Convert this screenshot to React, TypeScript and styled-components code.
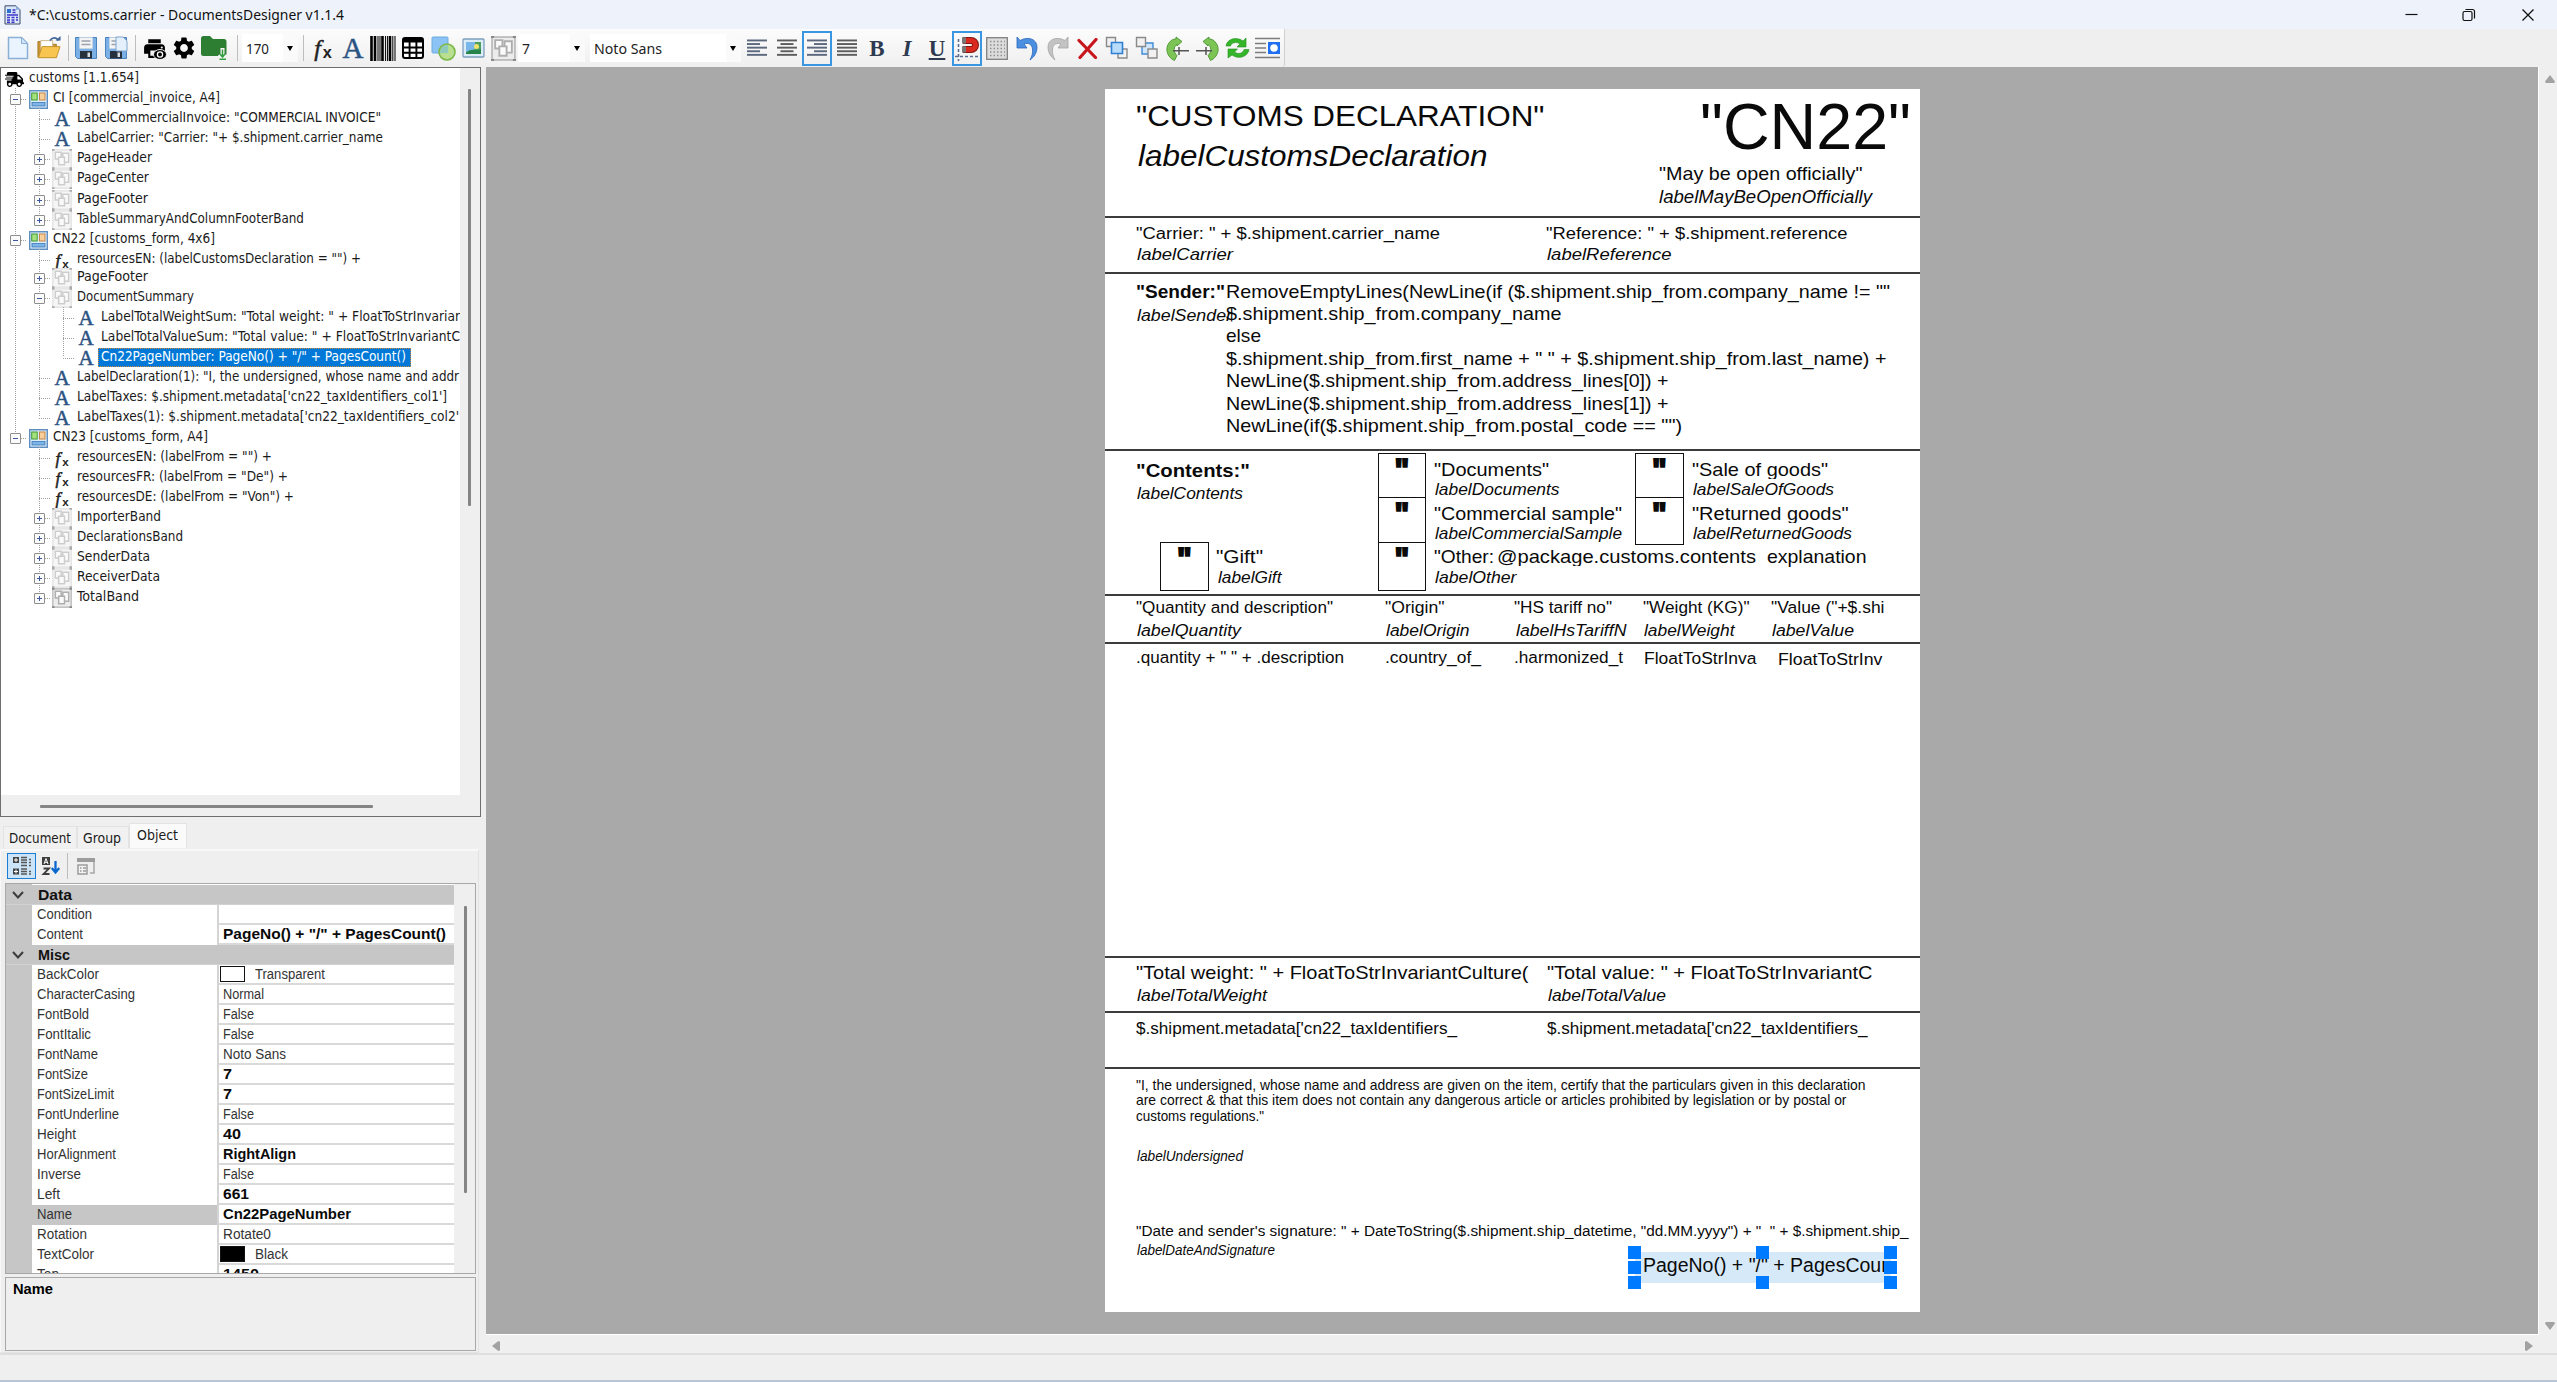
import React, { useLayoutEffect, useRef } from "react";
import styled, { createGlobalStyle, css } from "styled-components";
import { FaShippingFast } from "react-icons/fa";
import { MdFolder, MdPrint, MdSettings } from "react-icons/md";

const GlobalStyle = createGlobalStyle`
  html, body { margin: 0; padding: 0; overflow: hidden; }
  *, *::before, *::after { box-sizing: border-box; }
`;

const uiFont = `"DejaVu Sans Condensed", "DejaVu Sans", "Noto Sans", sans-serif`;
const gridFont = `"Liberation Sans", Arial, sans-serif`;

/* ---------- text that is stretched or condensed to a given width ---------- */

const Stretch = styled.span`
  display: inline-block;
  white-space: pre;
  transform-origin: 0 50%;
`;

function Fit({ w, children }: { w?: number; children: string }) {
  const ref = useRef<HTMLSpanElement>(null);
  useLayoutEffect(() => {
    const el = ref.current;
    if (!el || !w) return;
    el.style.transform = "none";
    el.style.width = "auto";
    const natural = el.getBoundingClientRect().width;
    el.style.width = `${w}px`;
    el.style.transform = `scaleX(${w / natural})`;
  }, [w, children]);
  return <Stretch ref={ref}>{children}</Stretch>;
}

/* ---------- window frame ---------- */

const Window = styled.div`
  width: 2557px;
  height: 1382px;
  display: flex;
  flex-direction: column;
  background: #efefef;
  color: #1b1b1b;
  font: 13.7px ${uiFont};
  overflow: hidden;
`;

const TitleBar = styled.header`
  flex: 0 0 29px;
  display: flex;
  align-items: center;
  background: #eef3fb;
  padding-left: 4px;
`;

const Title = styled.div`
  flex: 1;
  margin-left: 8px;
  color: #111;
  font: 14px/28px "Noto Sans", "Open Sans", sans-serif;
`;

const WindowButtons = styled.div`
  display: flex;
  & > svg { width: 58.5px; height: 28px; }
`;

const ToolRow = styled.div`
  flex: 0 0 38px;
  display: flex;
`;

const ToolBar = styled.div`
  width: 1285px;
  display: flex;
  align-items: center;
  padding-left: 3px;
  background: linear-gradient(#fcfcfc, #efefef);
  border-right: 1px solid #cfcfcf;
  border-bottom-right-radius: 3px;
`;

const Tool = styled.div<{ $on?: boolean; $w?: number }>`
  flex: 0 0 ${(p) => p.$w ?? 30}px;
  height: 35px;
  display: flex;
  align-items: center;
  justify-content: center;
  border: ${(p) => (p.$on ? "2px solid #3a96e0" : "0")};
  svg { display: block; flex: none; }
`;

const Divider = styled.div<{ $l: number; $r: number }>`
  flex: none;
  width: 1px;
  height: 26px;
  margin: 0 ${(p) => p.$r}px 0 ${(p) => p.$l}px;
  background: #bdbdbd;
`;

const Combo = styled.div<{ $w: number; $gap: number }>`
  flex: none;
  width: ${(p) => p.$w}px;
  height: 28px;
  margin-right: ${(p) => p.$gap}px;
  padding: 0 5px 0 4px;
  display: flex;
  align-items: center;
  justify-content: space-between;
  background: linear-gradient(to left, #fafafa 15px, #fff 15px);
  font: 14.5px "Noto Sans", sans-serif;
  color: #222;
  &::after {
    content: "";
    border: 3.5px solid transparent;
    border-top: 5px solid #000;
    border-bottom: 0;
  }
`;

const Glyph = styled.span<{ $italic?: boolean; $line?: boolean; $bold?: boolean; $c?: string; $s?: number }>`
  font-family: "Liberation Serif", serif;
  font-size: ${(p) => p.$s ?? 23}px;
  line-height: 1;
  font-weight: ${(p) => (p.$bold ? 700 : 400)};
  font-style: ${(p) => (p.$italic ? "italic" : "normal")};
  text-decoration: ${(p) => (p.$line ? "underline" : "none")};
  -webkit-text-stroke: ${(p) => (p.$bold ? 0 : 0.5)}px currentColor;
  color: ${(p) => p.$c ?? "#2d3a50"};
`;

const FxBox = styled.span<{ $s: number }>`
  display: inline-flex;
  align-items: baseline;
  font: italic 400 ${(p) => p.$s}px/1 "Liberation Serif", serif;
  -webkit-text-stroke: 0.5px currentColor;
  color: #222;
  sub {
    font: 700 ${(p) => p.$s * 0.68}px/1 "Liberation Sans", sans-serif;
    -webkit-text-stroke: 0;
    vertical-align: baseline;
    margin-left: 2px;
    position: relative;
    top: 2px;
  }
`;

const Fx = ({ s }: { s: number }) => (
  <FxBox $s={s}>f<sub>x</sub></FxBox>
);

/* ---------- icons ---------- */

const AppIcon = () => (
  <svg width="17" height="20" viewBox="0 0 17 20">
    <path d="M1 .8h11l4 4V19H1z" fill="#dbe7f7" stroke="#3b4a6b" />
    <path d="M12 .8v4h4z" fill="#8fb0dc" />
    <path d="M3 4h4v4H3z" fill="#2f6fd0" />
    <path d="M8.500 5h3M8.500 7.500h3M3 10h11M3 12.500h3M7.500 12.500h3M12 12.500h2M3 15h3M7.500 15h3M12 15h2M3 17.300h3M7.500 17.300h3" stroke="#3b35c9" strokeWidth="1.500" />
  </svg>
);

const NewIcon = () => (
  <svg width="22" height="24" viewBox="0 0 22 24">
    <path d="M1.500 1.500h13l6 6v15h-19z" fill="#eaf4fe" stroke="#8bb0d8" strokeWidth="1.500" />
    <path d="M14.500 1.500v6h6z" fill="#cfe3f8" stroke="#8bb0d8" />
  </svg>
);

const OpenIcon = () => (
  <svg width="26" height="24" viewBox="0 0 26 26">
    <path d="M1 23V6h7l2 3h11v14z" fill="#c99433" stroke="#a87927" />
    <path d="M4 5h13v10H4z" fill="#fff" stroke="#c9b182" />
    <path d="M1.500 23.500l4-12H25l-4 12z" fill="#f8c650" stroke="#c28f2a" />
    <path d="M14 5c3-4 7-4 9 0" fill="none" stroke="#44699b" strokeWidth="1.800" />
    <path d="M20 5h5.500V0z" fill="#44699b" />
  </svg>
);

const SaveIcon = ({ copy }: { copy?: boolean }) => (
  <svg width="24" height="24" viewBox="0 0 24 24">
    <path d="M1.500 1.500h21v21h-19l-2-2z" fill="#7bb0e6" stroke="#4b83bf" />
    <path d="M5.500 1.500h13v11h-13z" fill="#f4f4f4" stroke="#ccd6e0" strokeWidth=".6" />
    <path d="M7.500 5h9M7.500 8.500h9" stroke="#9aa3ad" strokeWidth="1.500" />
    <path d="M6 15h12v7.500H6z" fill="#27313d" />
    <path d="M13.500 16.500h2.500v4.500h-2.500z" fill="#d5dbe2" />
    {copy && <path d="M12 1h7l4 4v10H12z" fill="#e3effb" stroke="#7ea5cf" />}
  </svg>
);

const PrintIcon = () => (
  <svg width="25" height="25" viewBox="0 0 25 25">
    <MdPrint size={25} color="#000" />
    <ellipse cx="18" cy="18.500" rx="6.500" ry="5" fill="#000" stroke="#f5f5f5" />
    <circle cx="18" cy="18.500" r="2.600" fill="none" stroke="#fff" strokeWidth="1.300" />
  </svg>
);

const FolderIcon = () => (
  <svg width="30" height="28" viewBox="0 0 30 28">
    <path d="M1 4.500Q1 2 3.500 2H10l3 3h11q2.500 0 2.500 2.500v12Q26.500 22 24 22H3.500Q1 22 1 19.500z" fill="#2d7d32" />
    <path d="M22.500 14v10M19.500 20.500l3 4 3-4" fill="none" stroke="#f6f6f6" strokeWidth="4" />
    <path d="M22.500 15.500v7M20 20l2.500 3 2.500-3M19.500 25.200h6.500" fill="none" stroke="#2f9e3c" strokeWidth="1.500" />
  </svg>
);

const BarcodeIcon = () => (
  <svg width="26" height="25" viewBox="0 0 26 25">
    <path d="M1.500 0v25M5 0v25M12.500 0v25M20 0v25" stroke="#000" strokeWidth="2.600" />
    <path d="M8 0v25M10 0v25M15.500 0v25M17.500 0v25M22.800 0v25M25 0v25" stroke="#111" strokeWidth="1.100" />
  </svg>
);

const TableIcon = () => (
  <svg width="22" height="22" viewBox="0 0 22 22">
    <rect x="1" y="1" width="20" height="20" rx="2" fill="#fff" stroke="#000" strokeWidth="2" />
    <path d="M1 3.500h20" stroke="#000" strokeWidth="4" />
    <path d="M1 10.500h20M1 15.800h20M7.600 4v17M14.400 4v17" stroke="#000" strokeWidth="1.900" />
  </svg>
);

const ShapesIcon = () => (
  <svg width="25" height="25" viewBox="0 0 25 25">
    <rect x="1" y="1" width="16" height="16" rx="1" fill="#8cc3f5" stroke="#6cabdf" />
    <circle cx="16" cy="16" r="8" fill="#b3dd86" fillOpacity=".9" stroke="#7cb84a" strokeWidth="1.600" />
    <path d="M9 17v-1a7 7 0 0 1 8-7v8z" fill="#7cc0d8" opacity=".6" />
  </svg>
);

const PictureIcon = () => (
  <svg width="23" height="20" viewBox="0 0 23 20">
    <rect x="1" y="1" width="21" height="18" rx="1" fill="#dcecf7" stroke="#7d9fbd" strokeWidth="1.300" />
    <rect x="4" y="4" width="15" height="12" fill="#4c9f5f" />
    <path d="M4 4h9v7l-9 3z" fill="#79b7ea" />
    <circle cx="14.500" cy="8.500" r="2.500" fill="#f3e36b" />
    <path d="M4 16c3-7 10-2 15-5v5z" fill="#26834a" />
  </svg>
);

const BandIcon = ({ s, dark }: { s: number; dark?: boolean }) => (
  <svg width={s} height={s} viewBox="0 0 24 24">
    <rect x="1" y="1" width="22" height="22" fill={dark ? "#ececec" : "#f6f6f6"} stroke={dark ? "#b0b0b0" : "#dedede"} strokeWidth="1.400" />
    <g fill="#fafafa" stroke={dark ? "#aeaeae" : "#cdcdcd"} strokeWidth="1.800">
      <path d="M4 4h7v8H4z" />
      <path d="M13 5h7v11h-7z" />
      <path d="M8 10h7v9H8z" />
    </g>
    <path d="M0 0h3v2H0zM21 0h3v2h-3zM0 22h3v2H0zM21 22h3v2h-3z" fill={dark ? "#888" : "#aaa"} />
  </svg>
);

const AlignIcon = ({ kind }: { kind: "l" | "c" | "r" | "j" }) => {
  const wide = 20;
  const widths = kind === "j" ? [20, 20, 20, 20, 20] : [20, 13, 20, 13, 20];
  return (
    <svg width="20" height="20" viewBox="0 0 20 20">
      {widths.map((w, i) => {
        const x = kind === "r" ? wide - w : kind === "c" ? (wide - w) / 2 : 0;
        return <rect key={i} x={x} y={1.5 + i * 3.6} width={w} height="1.900" fill={kind === "l" || kind === "r" ? "#5b677c" : "#5c5c5c"} />;
      })}
    </svg>
  );
};

const MagnetIcon = () => (
  <svg width="25" height="25" viewBox="0 0 25 25">
    <path d="M8 4.500h8a4 4 0 0 1 0 9H8" fill="none" stroke="#7c1712" strokeWidth="7" />
    <path d="M11 4.500h5a4 4 0 0 1 0 9H11" fill="none" stroke="#da2a20" strokeWidth="5" />
    <path d="M7 1.300h4v6.200H7zM7 10.300h4v6.200H7z" fill="#777" />
    <path d="M3.500 3v22M0 20.500h23" stroke="#5b6f94" strokeWidth="1.600" strokeDasharray="3 2" />
  </svg>
);

const GridIcon = () => (
  <svg width="22" height="23" viewBox="0 0 22 23">
    <rect x=".7" y=".7" width="20.600" height="21.600" fill="#dcdcdc" stroke="#808080" strokeWidth="1.300" />
    <path d="M4 4.500h15M4 8h15M4 11.500h15M4 15h15M4 18.500h15" stroke="#8f8f8f" strokeWidth="1.500" strokeDasharray="1.500 2" />
  </svg>
);

const TurnIcon = ({ redo }: { redo?: boolean }) => (
  <svg width="23" height="25" viewBox="0 0 23 25">
    <g transform={redo ? "matrix(-1 0 0 1 23 0)" : undefined} fill={redo ? "#c3c3c3" : "#4b8fe0"} stroke={redo ? "#a4a4a4" : "#2a66b8"} strokeWidth=".8">
      <path d="M1 1l3 3.500C12 0 21 3 21 11c0 6-3 10-7 13 2-4 3-7 2.500-11C16 8 12 6.500 8 8l3 4H1z" />
    </g>
  </svg>
);

const DeleteIcon = () => (
  <svg width="21" height="21" viewBox="0 0 21 21">
    <path d="M2 2.500L18.500 19.500M19 1.500L3 19.500" stroke="#c8161d" strokeWidth="3.200" strokeLinecap="round" />
  </svg>
);

const LayersIcon = ({ back }: { back?: boolean }) => (
  <svg width="24" height="24" viewBox="0 0 24 24">
    {back ? (
      <>
        <path d="M7 7h11v11H7z" fill="#cfe6fb" stroke="#3f8bd6" strokeWidth="1.400" />
        <path d="M1.500 1.500h9v9h-9zM13 13h9v9h-9z" fill="#f1f1f1" stroke="#8a8a8a" strokeWidth="1.400" />
      </>
    ) : (
      <>
        <path d="M1.500 1.500h9v9h-9zM13 13h9v9h-9z" fill="#f1f1f1" stroke="#8a8a8a" strokeWidth="1.400" />
        <path d="M6.500 6.500h11v11h-11z" fill="#b9dcfb" stroke="#2f80d4" strokeWidth="1.600" />
      </>
    )}
  </svg>
);

const StepIcon = ({ right }: { right?: boolean }) => (
  <svg width="25" height="25" viewBox="0 0 25 25">
    <g transform={right ? "matrix(-1 0 0 1 25 0)" : undefined}>
      <path d="M11 1l6 4.500-5 4.500V8.500c-3.500 2-4 7.500 0 11l-2.500 5C1.500 21 0 12 4 7c2-3 4-4 7-4z" fill="#7cc455" stroke="#4a9430" strokeWidth=".9" />
      <path d="M8 14.800h16M14 11v8" stroke="#555" strokeWidth="1.500" />
    </g>
  </svg>
);

const RefreshIcon = () => (
  <svg width="25" height="24" viewBox="0 0 25 24">
    <g fill="#35b52a" stroke="#22901c" strokeWidth=".6">
      <path d="M1 10C2 3 11 0 18 5l3-3v9h-9l3-3C11 5 6 7 5.500 10z" />
      <path d="M24 13.500c-1 7-10 10.500-17 5.500l-4 3v-9h9.500l-3 3c4 3 9 1 9.500-2.500z" />
    </g>
  </svg>
);

const WrapIcon = () => (
  <svg width="25" height="22" viewBox="0 0 25 22">
    <path d="M0 1.500h25M0 6.500h11M0 11h11M0 15.500h11M0 20.500h25" stroke="#7c7c7c" strokeWidth="1.600" />
    <rect x="13" y="5" width="12" height="12" fill="#1f6ff0" />
    <circle cx="19" cy="11" r="3.800" fill="#fff" />
  </svg>
);

const DocIcon = () => (
  <svg width="19" height="19" viewBox="0 0 19 19">
    <rect x=".7" y=".7" width="17.600" height="17.600" fill="#d9ecfa" stroke="#5f8fc0" strokeWidth="1.400" />
    <rect x="2.700" y="3" width="5.500" height="7" fill="#a6e07c" stroke="#3f9a33" />
    <rect x="10.500" y="3" width="5.500" height="7" fill="#f6cf9b" stroke="#c98444" />
    <rect x="3" y="12.500" width="13" height="3.500" fill="#7db5e8" stroke="#3d78b5" strokeWidth=".8" />
  </svg>
);

/* ---------- object tree ---------- */

const Main = styled.div`
  flex: 1;
  min-height: 0;
  display: flex;
`;

const Side = styled.aside`
  flex: 0 0 486px;
  display: flex;
  flex-direction: column;
`;

const TreePanel = styled.section`
  width: 481px;
  height: 750px;
  border: 1.500px solid #6e6e6e;
  display: grid;
  grid-template: 727px 1fr / 459px 1fr;
`;

const TreeBody = styled.div`
  background: #fff;
  overflow: hidden;
`;

const VTrack = styled.div<{ $top: number; $len: number; $left: number }>`
  background: #efefef;
  padding: ${(p) => p.$top}px 0 0 ${(p) => p.$left}px;
  &::before {
    content: "";
    display: block;
    width: 2.500px;
    height: ${(p) => p.$len}px;
    border-radius: 1px;
    background: #858585;
  }
`;

const HTrack = styled.div`
  grid-column: 1 / 3;
  background: #efefef;
  padding: 10px 0 0 39px;
  &::before {
    content: "";
    display: block;
    width: 333px;
    height: 2.500px;
    border-radius: 1px;
    background: #858585;
  }
`;

const TreeRow = styled.div<{ $shift?: number }>`
  height: 20px;
  margin-top: ${(p) => p.$shift ?? 0}px;
  display: flex;
  align-items: center;
  padding-left: 2px;
`;

const dotsV = `repeating-linear-gradient(#a0a0a0 0 1px, transparent 1px 2px)`;
const dotsH = `repeating-linear-gradient(to right, #a0a0a0 0 1px, transparent 1px 2px)`;

const Branch = styled.div<{ $v: "full" | "half" | "none"; $h?: boolean }>`
  flex: 0 0 24px;
  height: 20px;
  display: flex;
  align-items: center;
  justify-content: center;
  background:
    ${dotsV} 12px 0 / 1px ${(p) => (p.$v === "full" ? "100%" : p.$v === "half" ? "50%" : "0")} no-repeat,
    ${dotsH} 12px 11px / ${(p) => (p.$h ? "13px" : "0")} 1px no-repeat;
`;

const Expander = styled.div<{ $open: boolean }>`
  width: 11px;
  height: 11px;
  margin: 3px 0 0 1px;
  border: 1px solid #8e8e8e;
  border-radius: 1px;
  background:
    linear-gradient(#3d57a5, #3d57a5) center / 5px 1px no-repeat,
    linear-gradient(#3d57a5, #3d57a5) center / 1px ${(p) => (p.$open ? 0 : 5)}px no-repeat,
    #fafafa;
`;

const IconCell = styled.div`
  flex: 0 0 20px;
  height: 20px;
  margin: 2px 4px 0 1px;
  display: flex;
  align-items: center;
  justify-content: center;
  svg { display: block; flex: none; }
`;

const NodeText = styled.div<{ $sel?: boolean }>`
  height: 19px;
  line-height: 17px;
  padding: 0 2px 0 1px;
  white-space: pre;
  ${(p) =>
    p.$sel &&
    css`
      color: #fff;
      background: #0078d7;
      outline: 1px dotted #d08a3c;
      outline-offset: -1px;
      padding: 0 5px 0 3px;
      margin-left: -2px;
    `}
`;

type Kind = "truck" | "doc" | "A" | "fx" | "band" | "bandDark";
type Line = "full" | "half" | "none";
interface Node { t: string; k: Kind; w: number; lines: Line[]; exp?: boolean; sel?: boolean; shift?: number }

const F: Line = "full", H: Line = "half", N: Line = "none";
const nodes: Node[] = [
  { t: "customs [1.1.654]", k: "truck", w: 110, lines: [] },
  { t: "CI [commercial_invoice, A4]", k: "doc", w: 167, lines: [F], exp: true },
  { t: 'LabelCommercialInvoice: "COMMERCIAL INVOICE"', k: "A", w: 304, lines: [F, F] },
  { t: 'LabelCarrier: "Carrier: "+ $.shipment.carrier_name', k: "A", w: 306, lines: [F, F] },
  { t: "PageHeader", k: "band", w: 75, lines: [F, F], exp: false },
  { t: "PageCenter", k: "band", w: 72, lines: [F, F], exp: false },
  { t: "PageFooter", k: "band", w: 71, lines: [F, F], exp: false, shift: 1 },
  { t: "TableSummaryAndColumnFooterBand", k: "band", w: 227, lines: [F, H], exp: false },
  { t: "CN22 [customs_form, 4x6]", k: "doc", w: 162, lines: [F], exp: true },
  { t: 'resourcesEN: (labelCustomsDeclaration = "") +', k: "fx", w: 284, lines: [F, F] },
  { t: "PageFooter", k: "band", w: 71, lines: [F, F], exp: false, shift: -2 },
  { t: "DocumentSummary", k: "band", w: 117, lines: [F, F], exp: true },
  { t: 'LabelTotalWeightSum: "Total weight: " + FloatToStrInvariar', k: "A", w: 359, lines: [F, F, F] },
  { t: 'LabelTotalValueSum: "Total value: " + FloatToStrInvariantC', k: "A", w: 359, lines: [F, F, F] },
  { t: 'Cn22PageNumber: PageNo() + "/" + PagesCount()', k: "A", w: 305, lines: [F, F, H], sel: true },
  { t: 'LabelDeclaration(1): "I, the undersigned, whose name and addr', k: "A", w: 382, lines: [F, F] },
  { t: "LabelTaxes: $.shipment.metadata['cn22_taxIdentifiers_col1']", k: "A", w: 370, lines: [F, F] },
  { t: "LabelTaxes(1): $.shipment.metadata['cn22_taxIdentifiers_col2'", k: "A", w: 382, lines: [F, H] },
  { t: "CN23 [customs_form, A4]", k: "doc", w: 155, lines: [H], exp: true },
  { t: 'resourcesEN: (labelFrom = "") +', k: "fx", w: 195, lines: [N, F] },
  { t: 'resourcesFR: (labelFrom = "De") +', k: "fx", w: 211, lines: [N, F] },
  { t: 'resourcesDE: (labelFrom = "Von") +', k: "fx", w: 217, lines: [N, F] },
  { t: "ImporterBand", k: "band", w: 84, lines: [N, F], exp: false },
  { t: "DeclarationsBand", k: "band", w: 106, lines: [N, F], exp: false },
  { t: "SenderData", k: "band", w: 73, lines: [N, F], exp: false },
  { t: "ReceiverData", k: "band", w: 83, lines: [N, F], exp: false },
  { t: "TotalBand", k: "bandDark", w: 62, lines: [N, H], exp: false },
];

const nodeIcon = (k: Kind) => {
  switch (k) {
    case "truck": return <FaShippingFast size={19} color="#000" />;
    case "doc": return <DocIcon />;
    case "A": return <Glyph $c="#2b5382" $s={21}>A</Glyph>;
    case "fx": return <Fx s={17} />;
    case "band": return <BandIcon s={20} />;
    default: return <BandIcon s={20} dark />;
  }
};

/* ---------- tabs and property grid ---------- */

const Tabs = styled.div`
  display: flex;
  align-items: flex-end;
  height: 32px;
  padding: 0 0 1px 3px;
`;

const Tab = styled.div<{ $w: number; $on?: boolean }>`
  width: ${(p) => p.$w}px;
  height: ${(p) => (p.$on ? 25 : 22)}px;
  line-height: 22px;
  padding-left: ${(p) => (p.$on ? 7 : 5)}px;
  border: 1px solid #e3e3e3;
  border-bottom: 0;
  background: ${(p) => (p.$on ? "#fafafa" : "#f1f1f1")};
  font-size: 14px;
`;

const TabPage = styled.div`
  flex: 1;
  width: 479px;
  border: 1px solid #e3e3e3;
  border-left-color: #f8f8f8;
  border-top: 2px solid #f8f8f8;
  padding: 2px 2px 0 4px;
  display: flex;
  flex-direction: column;
`;

const GridTools = styled.div`
  height: 30px;
  display: flex;
  align-items: flex-start;
  padding-left: 2px;
`;

const GridTool = styled.div<{ $on?: boolean }>`
  width: 29px;
  height: 26px;
  display: flex;
  align-items: center;
  justify-content: center;
  ${(p) => p.$on && css`background: #cce4f7; border: 1px solid #1a7fd4;`}
`;

const PropPanel = styled.div`
  width: 471px;
  height: 391px;
  border: 1px solid #a8a8a8;
  display: grid;
  grid-template-columns: 448px 1fr;
  overflow: hidden;
  font: 14px ${gridFont};
  color: #333;
`;

const PropList = styled.div`
  padding-top: 1px;
  background: linear-gradient(to right, #c6c6c6 26px, #fff 26px);
  height: 600px;
`;

const CatRow = styled.div`
  height: 20px;
  display: flex;
  align-items: center;
  background: #c6c6c6;
  border-bottom: 1px solid #d2d2d2;
  color: #111;
  font-weight: 700;
  svg { margin: 0 14px 0 6px; }
`;

const PropRow = styled.div`
  height: 20px;
  margin-left: 26px;
  display: flex;
  line-height: 19px;
  border-bottom: 2px solid #d9d9d9;
`;

const PropName = styled.div<{ $on?: boolean }>`
  width: 187px;
  height: 20px;
  padding-left: 5px;
  border-right: 2px solid #d4d4d4;
  background: ${(p) => (p.$on ? "#c6c6c6" : "#fff")};
`;

const PropValue = styled.div<{ $b?: boolean }>`
  display: flex;
  align-items: flex-start;
  padding-left: 4px;
  font-weight: ${(p) => (p.$b ? 700 : 400)};
  color: ${(p) => (p.$b ? "#0a0a0a" : "#333")};
`;

const Swatch = styled.i<{ $c: string }>`
  width: 25px;
  height: 16px;
  margin: 1px 10px 0 -3px;
  border: 1.500px solid #111;
  background: ${(p) => p.$c};
`;

const Help = styled.div`
  width: 471px;
  height: 74px;
  margin-top: 3px;
  padding: 3px 7px;
  border: 1px solid #a8a8a8;
  color: #000;
  font: 700 14px ${gridFont};
`;

interface Prop { n: string; w: number; v: string; vw?: number; b?: boolean; swatch?: string; on?: boolean }

const dataProps: Prop[] = [
  { n: "Condition", w: 55, v: "" },
  { n: "Content", w: 46, v: 'PageNo() + "/" + PagesCount()', vw: 223, b: true },
];
const miscProps: Prop[] = [
  { n: "BackColor", w: 62, v: "Transparent", vw: 70, swatch: "#fff" },
  { n: "CharacterCasing", w: 98, v: "Normal", vw: 41 },
  { n: "FontBold", w: 52, v: "False", vw: 31 },
  { n: "FontItalic", w: 54, v: "False", vw: 31 },
  { n: "FontName", w: 61, v: "Noto Sans", vw: 63 },
  { n: "FontSize", w: 51, v: "7", vw: 9, b: true },
  { n: "FontSizeLimit", w: 77, v: "7", vw: 9, b: true },
  { n: "FontUnderline", w: 82, v: "False", vw: 31 },
  { n: "Height", w: 39, v: "40", vw: 18, b: true },
  { n: "HorAlignment", w: 79, v: "RightAlign", vw: 73, b: true },
  { n: "Inverse", w: 44, v: "False", vw: 31 },
  { n: "Left", w: 23, v: "661", vw: 26, b: true },
  { n: "Name", w: 35, v: "Cn22PageNumber", vw: 128, b: true, on: true },
  { n: "Rotation", w: 50, v: "Rotate0", vw: 48 },
  { n: "TextColor", w: 57, v: "Black", vw: 33, swatch: "#000" },
  { n: "Top", w: 22, v: "1450", vw: 36, b: true },
];

const Chevron = () => (
  <svg width="12" height="8" viewBox="0 0 12 8">
    <path d="M1 1l5 5.500L11 1" fill="none" stroke="#3c3c3c" strokeWidth="2" />
  </svg>
);

const Property = ({ p }: { p: Prop }) => (
  <PropRow>
    <PropName $on={p.on}><Fit w={p.w}>{p.n}</Fit></PropName>
    <PropValue $b={p.b}>
      {p.swatch && <Swatch $c={p.swatch} />}
      <Fit w={p.vw}>{p.v}</Fit>
    </PropValue>
  </PropRow>
);

/* ---------- design surface ---------- */

const Work = styled.main`
  flex: 1;
  display: grid;
  grid-template: 1268px 18px / 2053px 1fr;
`;

const Surface = styled.div`
  background: #a9a9a9;
  border-right: 1px solid #fff;
  border-bottom: 1px solid #fff;
  padding: 22px 0 0 619px;
`;

const Page = styled.article`
  position: relative;
  width: 815px;
  height: 1223px;
  background: #fff;
  color: #0a0a0a;
  font-family: "Liberation Sans", Arial, sans-serif;
  overflow: hidden;
`;

const Rule = styled.hr<{ $y: number }>`
  position: absolute;
  left: 0;
  top: ${(p) => p.$y}px;
  width: 100%;
  height: 2px;
  margin: 0;
  border: 0;
  background: #3c3c3c;
`;

const Label = styled.div<{ $x: number; $base: number; $s: number; $i?: boolean; $b?: boolean; $clip?: number }>`
  position: absolute;
  left: ${(p) => p.$x - 1}px;
  top: ${(p) => p.$base - p.$s * 0.8465}px;
  height: ${(p) => (p.$clip ? p.$s * 0.8465 + p.$clip : p.$s * 1.1)}px;
  overflow: ${(p) => (p.$clip ? "hidden" : "visible")};
  font-size: ${(p) => p.$s}px;
  line-height: ${(p) => p.$s}px;
  font-style: ${(p) => (p.$i ? "italic" : "normal")};
  font-weight: ${(p) => (p.$b ? 700 : 400)};
  white-space: pre;
`;

const CheckBox = styled.div<{ $x: number; $y: number; $h: number }>`
  position: absolute;
  left: ${(p) => p.$x}px;
  top: ${(p) => p.$y}px;
  width: 48.500px;
  height: ${(p) => p.$h}px;
  border: 1.500px solid #111;
  text-align: center;
  font: 700 31px/33px "Liberation Sans", sans-serif;
  -webkit-text-stroke: 1.800px #0a0a0a;
`;

const Selection = styled.div`
  position: absolute;
  left: 530px;
  top: 1163px;
  width: 256px;
  height: 31px;
  background: #d6e9f8;
`;

const Handle = styled.i<{ $x: number; $y: number }>`
  position: absolute;
  left: ${(p) => p.$x}px;
  top: ${(p) => p.$y}px;
  width: 13px;
  height: 13px;
  background: #007bff;
`;

const Arrow = styled.i<{ $d: "up" | "down" | "left" | "right" }>`
  display: block;
  width: 10px;
  height: 8px;
  background: #a2a2a2;
  clip-path: polygon(50% 0, 100% 80%, 92% 100%, 8% 100%, 0 80%);
  transform: rotate(${(p) => ({ up: 0, down: 180, left: -90, right: 90 })[p.$d]}deg);
`;

const VBar = styled.div`
  display: flex;
  flex-direction: column;
  justify-content: space-between;
  padding: 8px 0 5px 6px;
`;

const HBar = styled.div`
  display: flex;
  align-items: center;
  justify-content: space-between;
  padding: 4px 5px 0 5px;
`;

const StatusBar = styled.footer`
  flex: 0 0 29px;
  border-top: 2px solid #dedede;
  border-bottom: 2px solid #b9c5d5;
`;

/* x, right edge, baseline, size, text, style */
type L = [number, number, number, number, string, string?];
const labels: L[] = [
  [32, 438.5, 38, 29, '"CUSTOMS DECLARATION"'],
  [34, 381.5, 77, 29.5, "labelCustomsDeclaration", "i"],
  [596, 805, 60, 65, '"CN22"'],
  [554.5, 756, 91, 19, '"May be open officially"'],
  [555, 766, 115, 18.5, "labelMayBeOpenOfficially", "i"],
  [32, 334, 151, 17.3, '"Carrier: " + $.shipment.carrier_name'],
  [33, 127, 171, 17, "labelCarrier", "i"],
  [442, 741.5, 151, 17.3, '"Reference: " + $.shipment.reference'],
  [443, 565.5, 171, 17, "labelReference", "i"],
  [32, 119, 209.5, 18.3, '"Sender:"', "b"],
  [33, 126, 232, 16.5, "labelSender", "i"],
  [122, 784, 209.7, 18.5, 'RemoveEmptyLines(NewLine(if ($.shipment.ship_from.company_name != ""'],
  [122, 455.5, 231.5, 18.5, "$.shipment.ship_from.company_name"],
  [122, 155, 253.7, 18.5, "else"],
  [122, 780.5, 276.3, 18.5, '$.shipment.ship_from.first_name + " " + $.shipment.ship_from.last_name) +'],
  [122, 562.5, 299, 18.5, "NewLine($.shipment.ship_from.address_lines[0]) +"],
  [122, 562.5, 321.5, 18.5, "NewLine($.shipment.ship_from.address_lines[1]) +"],
  [122, 576, 344, 18.5, 'NewLine(if($.shipment.ship_from.postal_code == "")'],
  [32, 144, 388, 19, '"Contents:"', "b"],
  [33, 137, 409.5, 16.5, "labelContents", "i"],
  [330, 443, 388, 18.5, '"Documents"'],
  [331, 453.5, 406, 17, "labelDocuments", "i"],
  [330, 516, 432, 18.5, '"Commercial sample"'],
  [331, 516, 450, 17, "labelCommercialSample", "i"],
  [330, 388, 475, 18.5, '"Other:'],
  [331, 410.5, 494.5, 17, "labelOther", "i"],
  [393, 650, 475, 18.5, "@package.customs.contents", "c"],
  [663, 760.5, 475, 18.5, "explanation"],
  [588, 722, 388, 18.5, '"Sale of goods"', "c"],
  [588.5, 727.5, 406, 17, "labelSaleOfGoods", "i"],
  [588, 742.5, 432, 18.5, '"Returned goods"', "c"],
  [588.5, 745.5, 450, 17, "labelReturnedGoods", "i"],
  [112, 157, 475, 18.5, '"Gift"'],
  [113.5, 175, 494.5, 17, "labelGift", "i"],
  [32, 227, 525, 16.8, '"Quantity and description"'],
  [281, 338.5, 525, 16.8, '"Origin"'],
  [410, 506, 525, 16.8, '"HS tariff no"'],
  [539, 643.5, 525, 16.8, '"Weight (KG)"'],
  [667, 778.5, 525, 16.8, '"Value ("+$.shi'],
  [33, 135, 547, 16.3, "labelQuantity", "i"],
  [282, 363.5, 547, 16.3, "labelOrigin", "i"],
  [411.5, 520, 547, 16.3, "labelHsTariffN", "i"],
  [540, 628.5, 547, 16.3, "labelWeight", "i"],
  [668, 748, 547, 16.3, "labelValue", "i"],
  [32, 238, 575.5, 16.8, '.quantity + " " + .description'],
  [281, 375, 575.5, 16.8, ".country_of_"],
  [410, 517, 575.5, 16.8, ".harmonized_t"],
  [539.5, 650, 574.5, 16.3, "FloatToStrInva"],
  [673.5, 776, 575.5, 16.3, "FloatToStrInv"],
  [32, 422.5, 891, 18.5, '"Total weight: " + FloatToStrInvariantCulture('],
  [442.5, 766, 891, 18.5, '"Total value: " + FloatToStrInvariantC'],
  [33, 161, 912, 17, "labelTotalWeight", "i"],
  [444, 560, 912, 17, "labelTotalValue", "i"],
  [32, 351, 945, 16.5, "$.shipment.metadata['cn22_taxIdentifiers_"],
  [442.5, 761, 945, 16.5, "$.shipment.metadata['cn22_taxIdentifiers_"],
  [32, 759.5, 1001.5, 14.5, '"I, the undersigned, whose name and address are given on the item, certify that the particulars given in this declaration'],
  [32, 740.5, 1016.5, 14.5, "are correct & that this item does not contain any dangerous article or articles prohibited by legislation or by postal or"],
  [32, 158, 1032, 14.5, 'customs regulations."'],
  [33, 137, 1072, 14.5, "labelUndersigned", "i"],
  [32, 802.5, 1147.5, 14.7, '"Date and sender\'s signature: " + DateToString($.shipment.ship_datetime, "dd.MM.yyyy") + "  " + $.shipment.ship_'],
  [33, 169, 1166, 14.5, "labelDateAndSignature", "i"],
];

const rules = [127, 183, 360, 505, 553, 867, 922, 978];
const boxes = [
  [272.5, 364, 45], [272.5, 408, 46], [272.5, 453, 49],
  [530, 364, 45], [530, 408, 48], [55, 453, 49],
];
const handles = [
  [523, 1157], [651, 1157], [779, 1157], [523, 1172], [779, 1172],
  [523, 1187], [651, 1187], [779, 1187],
];

export default function App() {
  return (
    <Window>
      <GlobalStyle />
      <TitleBar>
        <AppIcon />
        <Title><Fit w={315}>{"*C:\\customs.carrier - DocumentsDesigner v1.1.4"}</Fit></Title>
        <WindowButtons>
          <svg viewBox="0 0 58.5 28"><path d="M23.500 13.500h12" stroke="#111" strokeWidth="1.200" /></svg>
          <svg viewBox="0 0 58.5 28"><g fill="none" stroke="#111" strokeWidth="1.200"><rect x="23" y="10.500" width="9" height="9" rx="1.500" /><path d="M25.500 8.500h7a2 2 0 0 1 2 2v7" /></g></svg>
          <svg viewBox="0 0 58.5 28"><path d="M23.500 8.500l11 11M34.500 8.500l-11 11" stroke="#111" strokeWidth="1.300" /></svg>
        </WindowButtons>
      </TitleBar>

      <ToolRow>
        <ToolBar>
          <Tool><NewIcon /></Tool>
          <Tool $w={31}><OpenIcon /></Tool>
          <Divider $l={4} $r={2} />
          <Tool><SaveIcon /></Tool>
          <Tool><SaveIcon copy /></Tool>
          <Divider $l={4} $r={3} />
          <Tool><PrintIcon /></Tool>
          <Tool><MdSettings size={26} color="#000" /></Tool>
          <Tool $w={32}><FolderIcon /></Tool>
          <Divider $l={6} $r={4} />
          <Combo $w={56} $gap={5}><Fit w={23}>170</Fit></Combo>
          <Divider $l={0} $r={4} />
          <Tool><Fx s={24} /></Tool>
          <Tool><Glyph $c="#2b5382" $s={29}>A</Glyph></Tool>
          <Tool><BarcodeIcon /></Tool>
          <Tool><TableIcon /></Tool>
          <Tool><ShapesIcon /></Tool>
          <Tool><PictureIcon /></Tool>
          <Tool><BandIcon s={25} dark /></Tool>
          <Combo $w={67} $gap={5}><Fit w={8}>7</Fit></Combo>
          <Combo $w={151} $gap={1}><Fit w={68}>Noto Sans</Fit></Combo>
          <Tool><AlignIcon kind="l" /></Tool>
          <Tool><AlignIcon kind="c" /></Tool>
          <Tool $on><AlignIcon kind="r" /></Tool>
          <Tool><AlignIcon kind="j" /></Tool>
          <Tool><Glyph $bold>B</Glyph></Tool>
          <Tool><Glyph $bold $italic>I</Glyph></Tool>
          <Tool><Glyph $bold $line>U</Glyph></Tool>
          <Tool $on><MagnetIcon /></Tool>
          <Tool><GridIcon /></Tool>
          <Tool><TurnIcon /></Tool>
          <Tool><TurnIcon redo /></Tool>
          <Tool><DeleteIcon /></Tool>
          <Tool><LayersIcon /></Tool>
          <Tool><LayersIcon back /></Tool>
          <Tool><StepIcon /></Tool>
          <Tool><StepIcon right /></Tool>
          <Tool><RefreshIcon /></Tool>
          <Tool><WrapIcon /></Tool>
        </ToolBar>
      </ToolRow>

      <Main>
        <Side>
          <TreePanel>
            <TreeBody>
              {nodes.map((n, i) => (
                <TreeRow key={i} $shift={n.shift}>
                  {n.lines.map((v, j) => {
                    const last = j === n.lines.length - 1;
                    return (
                      <Branch key={j} $v={v} $h={last}>
                        {last && n.exp !== undefined && <Expander $open={n.exp} />}
                      </Branch>
                    );
                  })}
                  <IconCell>{nodeIcon(n.k)}</IconCell>
                  <NodeText $sel={n.sel}><Fit w={n.w}>{n.t}</Fit></NodeText>
                </TreeRow>
              ))}
            </TreeBody>
            <VTrack $top={21} $len={417} $left={8} />
            <HTrack />
          </TreePanel>

          <Tabs>
            <Tab $w={74}><Fit w={62}>Document</Fit></Tab>
            <Tab $w={52}><Fit w={38}>Group</Fit></Tab>
            <Tab $w={58} $on><Fit w={41}>Object</Fit></Tab>
          </Tabs>
          <TabPage>
            <GridTools>
              <GridTool $on>
                <svg width="20" height="20" viewBox="0 0 20 20">
                  <path d="M1 1h6v6H1zM1 12.500h6v6H1z" fill="#444" />
                  <path d="M4 2v4M2 4h4M4 13.500v4M2 15.500h4" stroke="#fff" />
                  <path d="M9 1.500h6M9 4h6M9 6.500h6M9 9.500h6M9 13h6M9 15.500h6M9 18h6M17 3.500h2M17 6.500h2M17 9.500h2M17 15.500h2M17 18h2" stroke="#555" strokeWidth="1.300" />
                </svg>
              </GridTool>
              <GridTool>
                <svg width="20" height="20" viewBox="0 0 20 20">
                  <rect x="1" y="1" width="8" height="8" fill="#3f3f3f" />
                  <path d="M3 8l2-5.500L7 8M3.700 6.300h2.600" stroke="#fff" fill="none" />
                  <path d="M2.500 12.500h5.500l-5.500 5.500H8.500" stroke="#3f3f3f" fill="none" strokeWidth="1.800" />
                  <path d="M14.500 5v11M10.800 12l3.700 4.500 3.700-4.500" stroke="#0a67d0" strokeWidth="2.300" fill="none" />
                </svg>
              </GridTool>
              <Divider $l={2} $r={4} />
              <GridTool>
                <svg width="19" height="18" viewBox="0 0 19 18">
                  <path d="M0 1h18v4H0z" fill="#9c9c9c" />
                  <path d="M17 5v11h-4" fill="none" stroke="#a8a8a8" strokeWidth="1.500" />
                  <path d="M1 8h9v9H1z" fill="#f3f3f3" stroke="#9c9c9c" strokeWidth="1.500" />
                  <path d="M3 11h1.500M6 11h3M3 14h1.500M6 14h3" stroke="#999" strokeWidth="1.300" />
                </svg>
              </GridTool>
            </GridTools>
            <PropPanel>
              <PropList>
                <CatRow><Chevron /><Fit w={34}>Data</Fit></CatRow>
                {dataProps.map((p) => <Property key={p.n} p={p} />)}
                <CatRow><Chevron /><Fit w={32}>Misc</Fit></CatRow>
                {miscProps.map((p) => <Property key={p.n} p={p} />)}
              </PropList>
              <VTrack $top={22} $len={287} $left={10} />
            </PropPanel>
            <Help><Fit w={40}>Name</Fit></Help>
          </TabPage>
        </Side>

        <Work>
          <Surface>
            <Page>
              {rules.map((y) => <Rule key={y} $y={y} />)}
              {boxes.map(([x, y, h], i) => <CheckBox key={i} $x={x} $y={y} $h={h}>"</CheckBox>)}
              {labels.map(([x, r, base, s, t, st], i) => (
                <Label key={i} $x={x} $base={base} $s={s} $i={st === "i"} $b={st === "b"} $clip={st === "c" ? 2.5 : undefined}>
                  <Fit w={r - x + 2}>{t}</Fit>
                </Label>
              ))}
              <Selection />
              <Label $x={539} $base={1183.5} $s={19.5}><Fit w={249}>{'PageNo() + "/" + PagesCoun'}</Fit></Label>
              {handles.map(([x, y], i) => <Handle key={i} $x={x} $y={y} />)}
            </Page>
          </Surface>
          <VBar><Arrow $d="up" /><Arrow $d="down" /></VBar>
          <HBar><Arrow $d="left" /><Arrow $d="right" /></HBar>
        </Work>
      </Main>
      <StatusBar />
    </Window>
  );
}
